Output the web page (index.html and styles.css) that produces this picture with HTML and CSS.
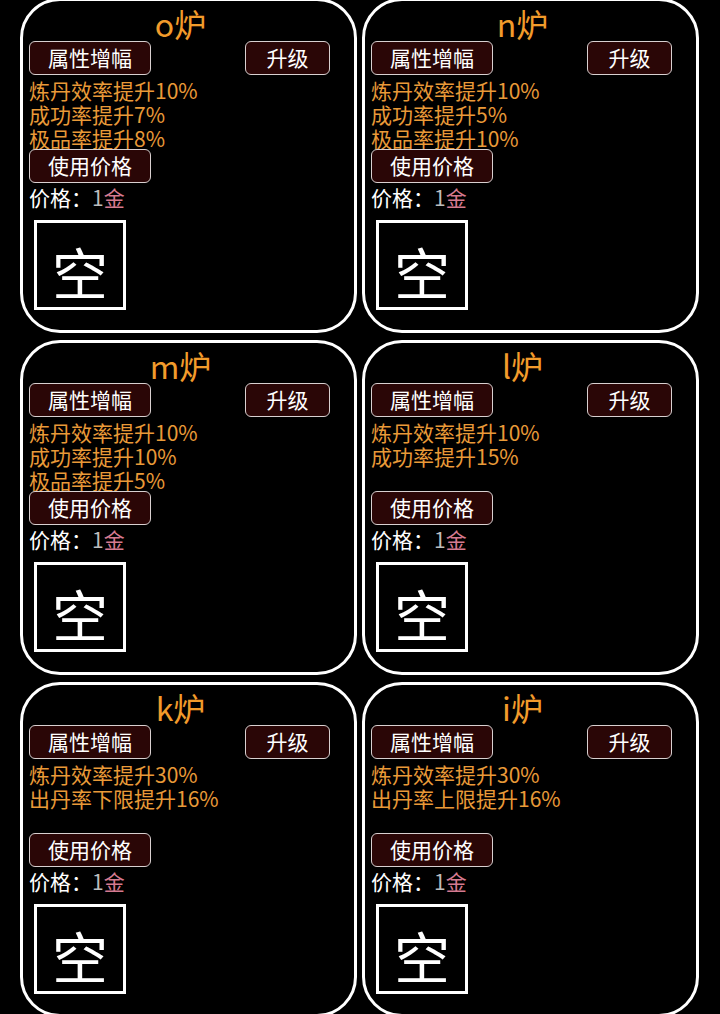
FILE: index.html
```html
<!DOCTYPE html>
<html lang="zh">
<head>
<meta charset="utf-8">
<link rel="stylesheet" href="styles.css">
</head>
<body>
<div class="grid">
  <div class="card">
    <div class="title">o炉</div>
    <div class="btnrow"><div class="btn wide">属性增幅</div><div class="btn narrow">升级</div></div>
    <div class="stats"><div>炼丹效率提升10%</div><div>成功率提升7%</div><div>极品率提升8%</div></div>
    <div class="btn wide">使用价格</div>
    <div class="price">价格：<span class="num">1</span><span class="gold">金</span></div>
    <div class="slot">空</div>
  </div>
  <div class="card">
    <div class="title">n炉</div>
    <div class="btnrow"><div class="btn wide">属性增幅</div><div class="btn narrow">升级</div></div>
    <div class="stats"><div>炼丹效率提升10%</div><div>成功率提升5%</div><div>极品率提升10%</div></div>
    <div class="btn wide">使用价格</div>
    <div class="price">价格：<span class="num">1</span><span class="gold">金</span></div>
    <div class="slot">空</div>
  </div>
  <div class="card">
    <div class="title">m炉</div>
    <div class="btnrow"><div class="btn wide">属性增幅</div><div class="btn narrow">升级</div></div>
    <div class="stats"><div>炼丹效率提升10%</div><div>成功率提升10%</div><div>极品率提升5%</div></div>
    <div class="btn wide">使用价格</div>
    <div class="price">价格：<span class="num">1</span><span class="gold">金</span></div>
    <div class="slot">空</div>
  </div>
  <div class="card">
    <div class="title">l炉</div>
    <div class="btnrow"><div class="btn wide">属性增幅</div><div class="btn narrow">升级</div></div>
    <div class="stats"><div>炼丹效率提升10%</div><div>成功率提升15%</div></div>
    <div class="btn wide">使用价格</div>
    <div class="price">价格：<span class="num">1</span><span class="gold">金</span></div>
    <div class="slot">空</div>
  </div>
  <div class="card">
    <div class="title">k炉</div>
    <div class="btnrow"><div class="btn wide">属性增幅</div><div class="btn narrow">升级</div></div>
    <div class="stats"><div>炼丹效率提升30%</div><div>出丹率下限提升16%</div></div>
    <div class="btn wide">使用价格</div>
    <div class="price">价格：<span class="num">1</span><span class="gold">金</span></div>
    <div class="slot">空</div>
  </div>
  <div class="card">
    <div class="title">i炉</div>
    <div class="btnrow"><div class="btn wide">属性增幅</div><div class="btn narrow">升级</div></div>
    <div class="stats"><div>炼丹效率提升30%</div><div>出丹率上限提升16%</div></div>
    <div class="btn wide">使用价格</div>
    <div class="price">价格：<span class="num">1</span><span class="gold">金</span></div>
    <div class="slot">空</div>
  </div>
</div>
</body>
</html>
```
FILE: styles.css
```css
html, body {
  margin: 0;
  padding: 0;
  background: #000;
  height: 1014px;
  overflow: hidden;
}
body {
  font-family: "Noto Sans CJK SC", "Roboto", sans-serif;
  color: #fff;
}
.grid {
  display: grid;
  grid-template-columns: 337px 337px;
  column-gap: 5px;
  row-gap: 7px;
  padding-left: 20px;
  margin-top: -2px;
}
.card {
  box-sizing: border-box;
  height: 335px;
  border: 3px solid #fff;
  border-radius: 40px;
  padding: 0 6px;
  display: flex;
  flex-direction: column;
  align-items: flex-start;
}
.title {
  align-self: stretch;
  text-align: center;
  padding-right: 16px;
  padding-top: 4px;
  font-size: 32px;
  line-height: 36px;
  color: #f29b2b;
}
.btnrow {
  align-self: stretch;
  display: flex;
  justify-content: space-between;
  padding-right: 18px;
}
.btn {
  box-sizing: border-box;
  height: 34px;
  border: 1.5px solid #d8d0d0;
  border-radius: 6px;
  background: #2a0606;
  color: #fff;
  font-size: 21px;
  line-height: 31px;
  text-align: center;
}
.wide { width: 122px; }
.narrow { width: 85px; }
.stats {
  padding-top: 3px;
  box-sizing: border-box;
  height: 74px;
  font-size: 21px;
  line-height: 24px;
  color: #e99a38;
}
.price {
  font-size: 21px;
  line-height: 28px;
  color: #fff;
}
.num { color: #bdbdbd; }
.gold { color: #d57a90; }
.slot {
  box-sizing: border-box;
  margin-top: 9px;
  margin-left: 5px;
  width: 92px;
  height: 90px;
  border: 3px solid #fff;
  display: flex;
  justify-content: center;
  align-items: center;
  padding-top: 12px;
  font-size: 56px;
  line-height: 1;
  color: #fff;
}
```
